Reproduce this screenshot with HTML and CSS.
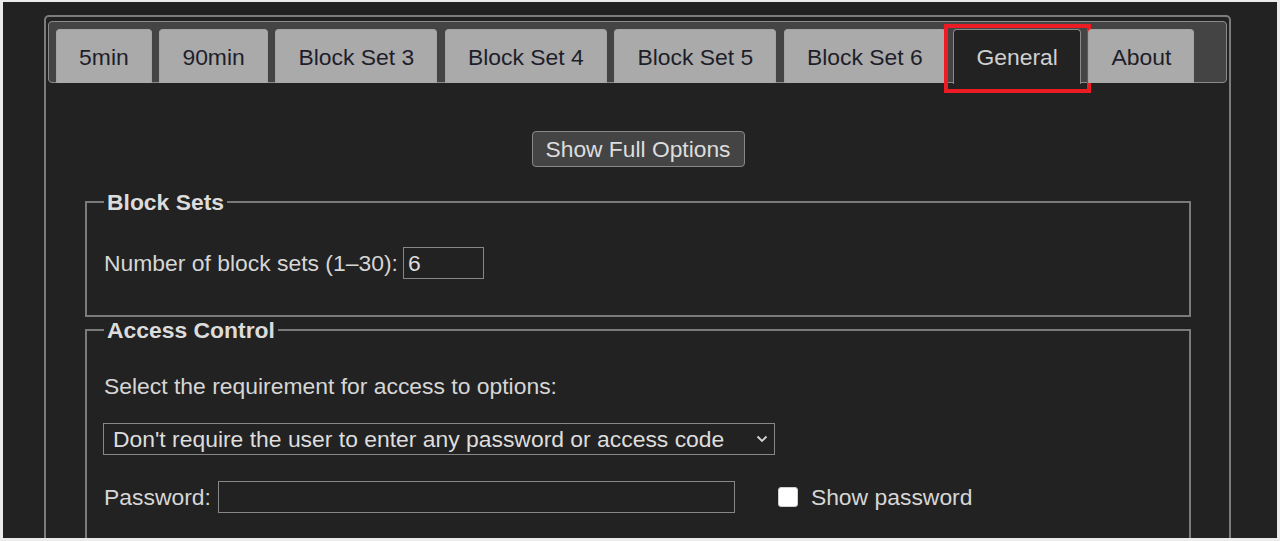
FILE: index.html
```html
<!DOCTYPE html>
<html lang="en">
<head>
<meta charset="utf-8">
<title>Options</title>
<link rel="stylesheet" href="styles.css">
</head>
<body>
<div class="screen">
  <div class="panel">
    <ul class="tabs">
      <li class="tab">5min</li>
      <li class="tab">90min</li>
      <li class="tab">Block Set 3</li>
      <li class="tab">Block Set 4</li>
      <li class="tab">Block Set 5</li>
      <li class="tab">Block Set 6</li>
      <li class="tab active">General<span class="highlight"></span></li>
      <li class="tab">About</li>
    </ul>
    <div class="content">
      <div class="actions"><button class="btn" type="button">Show Full Options</button></div>
      <fieldset class="group">
        <legend>Block Sets</legend>
        <p class="row">Number of block sets (1–30):<input class="field num" type="text" value="6"></p>
      </fieldset>
      <fieldset class="group">
        <legend>Access Control</legend>
        <p class="line">Select the requirement for access to options:</p>
        <p class="row">
          <span class="select-wrap">
            <select class="select">
              <option>Don't require the user to enter any password or access code</option>
            </select>
            <svg class="chevron" width="12" height="8" viewBox="0 0 12 8"><polyline points="1.5,1.5 6,6 10.5,1.5" fill="none" stroke="#d6d6d6" stroke-width="1.8"/></svg>
          </span>
        </p>
        <p class="row">Password:<input class="field pw" type="text"><input class="check" type="checkbox"><span class="check-label">Show password</span></p>
      </fieldset>
    </div>
  </div>
</div>
</body>
</html>
```

FILE: styles.css
```css
html, body {
  margin: 0;
  padding: 0;
  background: #ececec;
  height: 541px;
  overflow: hidden;
}

.screen {
  margin: 2px 3px 0 3px;
  height: 536px;
  background: #222222;
  overflow: hidden;
  padding-top: 13px;
  box-sizing: border-box;
  font-family: "Liberation Sans", Arial, sans-serif;
  font-size: 22.9px;
  color: #d6d6d6;
}

.panel {
  margin: 0 46px 0 41px;
  border: 2px solid #7c7c7c;
  border-radius: 5px;
  padding: 4px 2px 0 2px;
  height: 620px;
}

.tabs {
  list-style: none;
  margin: 0;
  padding: 7px 0 0 7px;
  height: 53px;
  background: #444444;
  border: 1px solid #8a8a8a;
  border-radius: 4px;
  display: flex;
  gap: 7.5px;
  box-sizing: content-box;
}

.tab {
  position: relative;
  height: 51px;
  line-height: 51px;
  padding: 2px 22.1px 0 22.1px;
  background: #aaaaaa;
  border: 1px solid #a4a4a4;
  border-bottom: none;
  border-radius: 4px 4px 0 0;
  color: #1e1e2a;
  white-space: nowrap;
}

.tab.active {
  background: #222222;
  color: #d0d0d0;
  border-color: #8a8a8a;
  height: 52px;
  margin-bottom: -1px;
}

.highlight {
  position: absolute;
  left: -10px;
  top: -6px;
  width: 139px;
  height: 61px;
  border: 4px solid #ed1c24;
}

.content {
  padding: 48px 36px 0 37px;
}

.actions {
  display: flex;
  justify-content: center;
  margin-bottom: 22px;
}

.btn {
  height: 36px;
  padding: 0 13px;
  background: #444444;
  border: 1px solid #888888;
  border-radius: 4px;
  color: #dddddd;
  font-family: "Liberation Sans", Arial, sans-serif;
  font-size: 22.8px;
}

.group {
  margin: 0;
  border: 2px solid #7a7a7a;
  padding: 8px 17px 12px 17px;
}

.group legend {
  padding: 0 3px;
  font-weight: bold;
  line-height: 26px;
  color: #dcdcdc;
}

.line {
  margin: 22px 0;
  line-height: 26px;
}

.row {
  margin: 22px 0;
  height: 36px;
  display: flex;
  align-items: center;
}

.field {
  height: 32px;
  box-sizing: border-box;
  background: #222222;
  border: 1px solid #878787;
  color: #dddddd;
  font-family: "Liberation Sans", Arial, sans-serif;
  font-size: 22.9px;
  padding: 0 4px;
  margin: 0 0 0 7px;
}

.num {
  width: 81px;
  margin-left: 5px;
}

.pw {
  width: 517px;
}

.select-wrap {
  position: relative;
  display: block;
  margin-left: -1px;
}

.select {
  appearance: none;
  -webkit-appearance: none;
  width: 672px;
  height: 32px;
  background: #222222;
  border: 1px solid #878787;
  border-radius: 0;
  color: #dddddd;
  font-family: "Liberation Sans", Arial, sans-serif;
  font-size: 22.9px;
  padding: 0 0 0 9px;
  margin: 0;
}

.chevron {
  position: absolute;
  right: 7px;
  top: 12px;
}

.check {
  appearance: none;
  -webkit-appearance: none;
  width: 20px;
  height: 20px;
  margin: 0 0 0 43px;
  background: #ffffff;
  border: 1px solid #d0d0d0;
  border-radius: 3px;
  box-sizing: border-box;
}

.check-label {
  margin-left: 13px;
}
```
